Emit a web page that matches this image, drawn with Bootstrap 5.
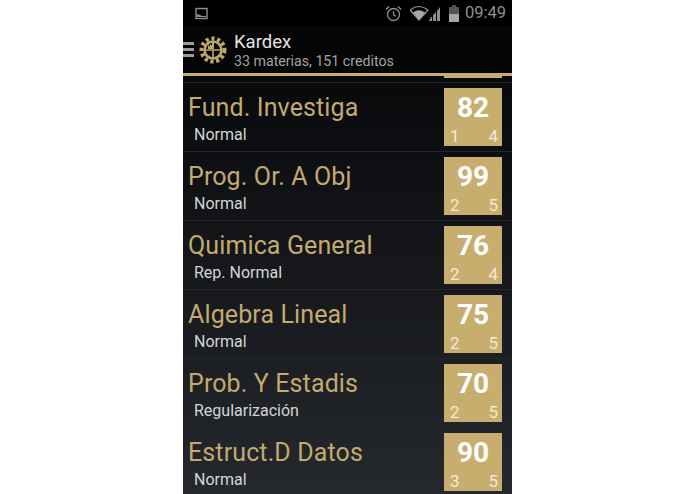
<!DOCTYPE html>
<html lang="es">
<head>
  <meta charset="UTF-8" />
  <meta name="viewport" content="width=device-width, initial-scale=1.0" />
  <title>Kardex</title>
  <link href="https://cdn.jsdelivr.net/npm/bootstrap@5.3.0/dist/css/bootstrap.min.css" rel="stylesheet">
  <style>
    html, body { height: 100%; overflow: hidden; background: #fff; }
    body { font-family: Roboto, "Liberation Sans", sans-serif; }
    .phone {
      width: 329px; height: 494px; margin-left: 183px; overflow: hidden;
      background: linear-gradient(#08090b 15%, #14161a 50%, #25282d 100%);
    }
    .status-bar { height: 26px; background: #000; color: #8f8f8f; padding: 1px 6px 0 12px; }
    .status-time { font-size: 16.5px; margin-left: 6px; line-height: 1; }
    .app-bar { height: 47px; background: #050505; }
    .burger { width: 11px; height: 15px; margin-right: 5px; }
    .gear { margin-right: 7px; }
    .app-title { color: #e4e4e4; font-size: 18.5px; line-height: 20px; margin-top: 1px; }
    .app-sub { color: #a3a3a3; font-size: 14.2px; line-height: 16px; margin-top: 1px; }
    .gold-line { height: 3px; background: #c8ae6e; }
    .stub { height: 2px; width: 58px; background: #c8ae6e; margin: 0 10px 4px auto; }
    .subject { height: 69px; border-top: 1px solid #24262a; padding: 5px 10px 5px 5px; }
    .subject-name { color: #c3aa6f; font-size: 25px; line-height: 30px; margin-top: 5px; letter-spacing: .12px; }
    .subject-type { color: #d5d5d5; font-size: 16px; line-height: 20px; margin: 2px 0 0 6px; }
    .grade { width: 58px; height: 58px; background: #c8ae6e; color: #fff; }
    .grade-num { font-size: 28px; font-weight: 700; line-height: 30px; padding-top: 5px; text-align: center; }
    .grade-foot { font-size: 17px; line-height: 18px; color: #f3ead3; padding: 4px 4px 0 6px; }
  </style>
</head>
<body>

<div class="phone">
  <div class="status-bar d-flex align-items-center">
    <svg width="13" height="13" viewBox="0 0 13 13" fill="none">
      <rect x="1" y="1.5" width="11" height="10" stroke="#8f8f8f" stroke-width="1.4"/>
      <path d="M2 10V7l3 1 2 1 4 0v1z" fill="#8f8f8f"/>
    </svg>
    <div class="ms-auto d-flex align-items-center">
      <svg class="me-2" width="17" height="17" viewBox="0 0 17 17" fill="none" stroke="#8f8f8f" stroke-width="1.3">
        <circle cx="8.5" cy="9.5" r="6"/>
        <path d="M8.5 6v3.8l2.5 1.5M1 4.5 4 1.5M16 4.5 13 1.5"/>
      </svg>
      <svg width="31" height="17" viewBox="0 0 31 17">
        <path d="M0 5Q9-2 18 5L9 15z" fill="none" stroke="#9a9a9a" stroke-width="1.2"/>
        <path d="M3 7.5Q9 3 15 7.5L9 15z" fill="#a8a8a8"/>
        <path d="M19 16h3v-4h-1zM23 16h3V7l-3 3zM27 16h3V2l-3 4z" fill="#8f8f8f"/>
      </svg>
      <svg class="ms-2" width="10" height="17" viewBox="0 0 10 17">
        <rect x="0" y="2" width="10" height="15" fill="#555"/>
        <rect x="3" y="0" width="4" height="2" fill="#555"/>
        <rect x="0" y="9" width="10" height="8" fill="#a5a5a5"/>
      </svg>
      <span class="status-time">09:49</span>
    </div>
  </div>

  <div class="app-bar d-flex align-items-center">
    <svg class="burger" viewBox="0 0 11 15">
      <path d="M0 0h11v3H0zM0 6h11v3H0zM0 12h11v3H0z" fill="#9c9c9c"/>
    </svg>
    <svg class="gear" width="28" height="28" viewBox="0 0 28 28" fill="none" stroke="#bda768">
      <circle cx="14" cy="14" r="11.5" stroke-width="4" stroke-dasharray="3.2 2.6"/>
      <circle cx="14" cy="14" r="8.5" stroke-width="2.6"/>
      <path d="M5 14h18M14 14v9" stroke-width="1.6"/>
      <path d="M9 13V9l2 1.5V8l2 1.5V5h2v8z" fill="#bda768" stroke="none"/>
    </svg>
    <div>
      <div class="app-title">Kardex</div>
      <div class="app-sub">33 materias, 151 creditos</div>
    </div>
  </div>
  <div class="gold-line"></div>

  <div id="subjects">
    <div class="stub"></div>
  </div>
</div>

<script src="https://cdn.jsdelivr.net/npm/bootstrap@5.3.0/dist/js/bootstrap.bundle.min.js"></script>
<script>
  const subjects = [
    ["Fund. Investiga", "Normal", 82, 1, 4],
    ["Prog. Or. A Obj", "Normal", 99, 2, 5],
    ["Quimica General", "Rep. Normal", 76, 2, 4],
    ["Algebra Lineal", "Normal", 75, 2, 5],
    ["Prob. Y Estadis", "Regularización", 70, 2, 5],
    ["Estruct.D Datos", "Normal", 90, 3, 5]
  ]

  const list = document.getElementById("subjects")
  subjects.forEach(s => {
    const div = document.createElement("div")
    div.className = "subject d-flex justify-content-between"
    div.innerHTML = `
      <div>
        <div class="subject-name">${s[0]}</div>
        <div class="subject-type">${s[1]}</div>
      </div>
      <div class="grade">
        <div class="grade-num">${s[2]}</div>
        <div class="grade-foot d-flex justify-content-between"><span>${s[3]}</span><span>${s[4]}</span></div>
      </div>
    `
    list.appendChild(div)
  })
</script>
</body>
</html>
